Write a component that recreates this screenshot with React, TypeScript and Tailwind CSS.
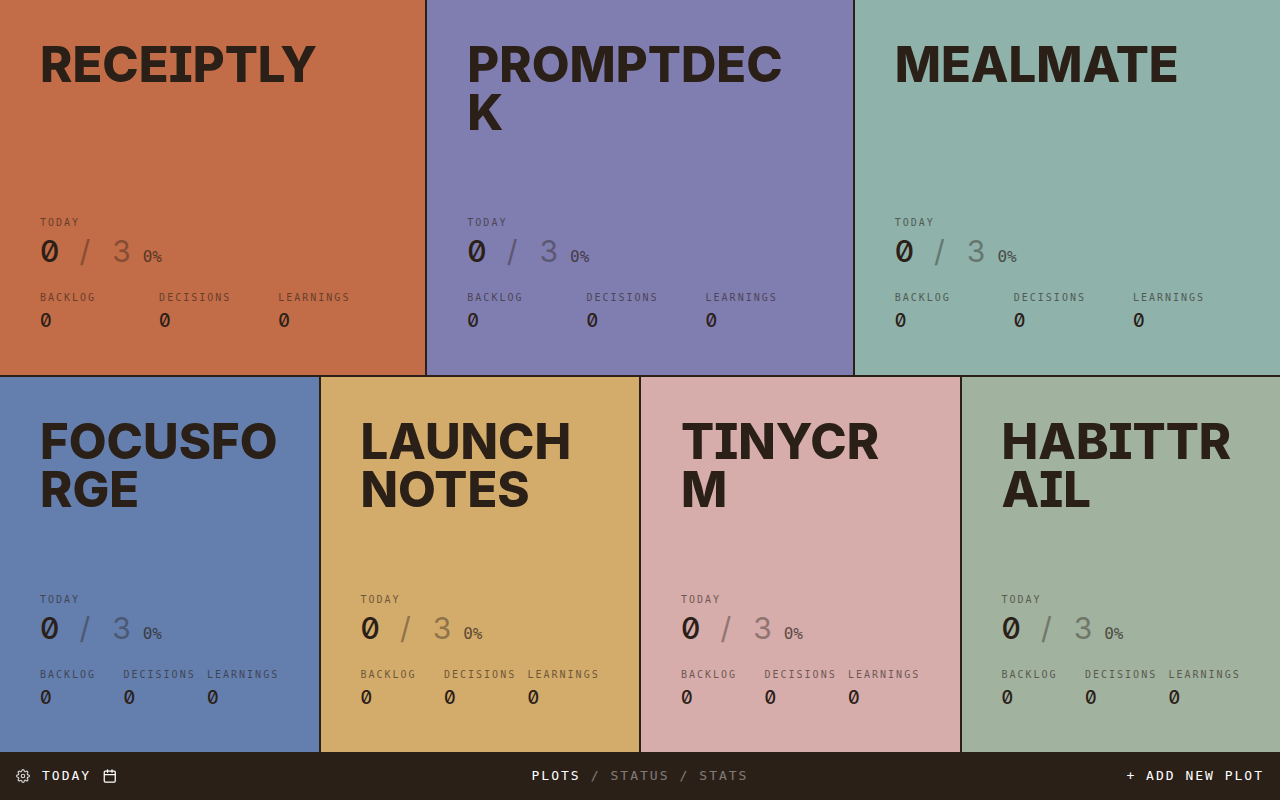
import { Fragment } from "react";

type Plot = {
  lines: string[];
  color: string;
};

const topPlots: Plot[] = [
  { lines: ["Receiptly"], color: "bg-[#c36d48]" },
  { lines: ["Promptdec", "k"], color: "bg-[#807eb0]" },
  { lines: ["Mealmate"], color: "bg-[#8fb2aa]" },
];

const bottomPlots: Plot[] = [
  { lines: ["Focusfo", "rge"], color: "bg-[#647fae]" },
  { lines: ["Launch", "Notes"], color: "bg-[#d3ac6b]" },
  { lines: ["Tinycr", "m"], color: "bg-[#d6adab]" },
  { lines: ["Habittr", "ail"], color: "bg-[#a1b29f]" },
];

const stats = ["Backlog", "Decisions", "Learnings"];

const tabs = ["Plots", "Status", "Stats"];

const mono = "font-['DejaVu_Sans_Mono',monospace]";
const digits = "font-['Inter',sans-serif] slashed-zero";

function PlotCard({ plot }: { plot: Plot }) {
  return (
    <article className={`flex min-w-0 flex-col justify-between p-10 ${plot.color}`}>
      <h2 className="pt-px font-['Inter',sans-serif] text-[49px] leading-12 font-extrabold uppercase [font-feature-settings:'cv08']">
        {plot.lines.map((line, i) => (
          <Fragment key={line}>
            {i > 0 && <br />}
            {line}
          </Fragment>
        ))}
      </h2>

      <div>
        <p className={`text-[10px] leading-4 tracking-[2px] uppercase opacity-60 ${mono}`}>Today</p>
        <p className={`mt-0.5 mb-[21px] flex items-baseline text-3xl leading-9 ${digits}`}>
          <span className="font-medium">0</span>
          <span className="ml-5 opacity-40">/</span>
          <span className="ml-[22px] opacity-40">3</span>
          <span className={`ml-3 text-base leading-4 opacity-70 ${mono}`}>0%</span>
        </p>
        <dl className="grid grid-cols-3 gap-3">
          {stats.map((label) => (
            <div key={label}>
              <dt className={`mb-px text-[10px] leading-4 tracking-[2px] uppercase opacity-60 ${mono}`}>{label}</dt>
              <dd className={`text-lg leading-7 font-medium ${digits}`}>0</dd>
            </div>
          ))}
        </dl>
      </div>
    </article>
  );
}

function GearIcon() {
  return (
    <svg className="size-3.5" viewBox="0 0 24 24" fill="none" stroke="currentColor" strokeWidth="2" strokeLinecap="round" strokeLinejoin="round">
      <circle cx="12" cy="12" r="3" />
      <path d="M19.4 15a1.65 1.65 0 0 0 .33 1.82l.06.06a2 2 0 1 1-2.83 2.83l-.06-.06a1.65 1.65 0 0 0-1.82-.33 1.65 1.65 0 0 0-1 1.51V21a2 2 0 0 1-4 0v-.09A1.65 1.65 0 0 0 9 19.4a1.65 1.65 0 0 0-1.82.33l-.06.06a2 2 0 1 1-2.83-2.83l.06-.06a1.65 1.65 0 0 0 .33-1.82 1.65 1.65 0 0 0-1.51-1H3a2 2 0 0 1 0-4h.09A1.65 1.65 0 0 0 4.6 9a1.65 1.65 0 0 0-.33-1.82l-.06-.06a2 2 0 1 1 2.83-2.83l.06.06a1.65 1.65 0 0 0 1.82.33H9a1.65 1.65 0 0 0 1-1.51V3a2 2 0 0 1 4 0v.09a1.65 1.65 0 0 0 1 1.51 1.65 1.65 0 0 0 1.82-.33l.06-.06a2 2 0 1 1 2.83 2.83l-.06.06a1.65 1.65 0 0 0-.33 1.82V9a1.65 1.65 0 0 0 1.51 1H21a2 2 0 0 1 0 4h-.09a1.65 1.65 0 0 0-1.51 1z" />
    </svg>
  );
}

function CalendarIcon() {
  return (
    <svg className="size-3.5" viewBox="0 0 14 14" fill="none" stroke="currentColor" strokeWidth="1.25" strokeLinecap="round" strokeLinejoin="round">
      <rect x="1.25" y="2" width="11" height="11" rx="1" />
      <path d="M1.5 5.5h10.5M4.5 0.75v2.5M9 0.75v2.5" />
    </svg>
  );
}

export default function App() {
  return (
    <div className="flex min-h-screen flex-col bg-[#2b2018] text-[#2b2018]">
      <main className="grid flex-1 grid-rows-2 gap-0.5">
        <div className="grid grid-cols-3 gap-0.5">
          {topPlots.map((plot) => (
            <PlotCard key={plot.lines[0]} plot={plot} />
          ))}
        </div>
        <div className="grid grid-cols-4 gap-0.5">
          {bottomPlots.map((plot) => (
            <PlotCard key={plot.lines[0]} plot={plot} />
          ))}
        </div>
      </main>

      <footer className={`grid h-12 grid-cols-[1fr_auto_1fr] items-center px-4 text-[13px] tracking-[2px] text-white uppercase ${mono}`}>
        <div className="flex items-center gap-3">
          <button type="button" aria-label="Settings" className="opacity-80">
            <GearIcon />
          </button>
          <button type="button" className="flex items-center gap-3 uppercase">
            Today
            <CalendarIcon />
          </button>
        </div>
        <nav className="flex items-center gap-2.5">
          {tabs.map((tab, i) => (
            <Fragment key={tab}>
              {i > 0 && <span className="opacity-40">/</span>}
              <button type="button" className={`uppercase ${i === 0 ? "" : "opacity-40"}`}>
                {tab}
              </button>
            </Fragment>
          ))}
        </nav>
        <button type="button" className="justify-self-end uppercase">
          + Add new plot
        </button>
      </footer>
    </div>
  );
}
